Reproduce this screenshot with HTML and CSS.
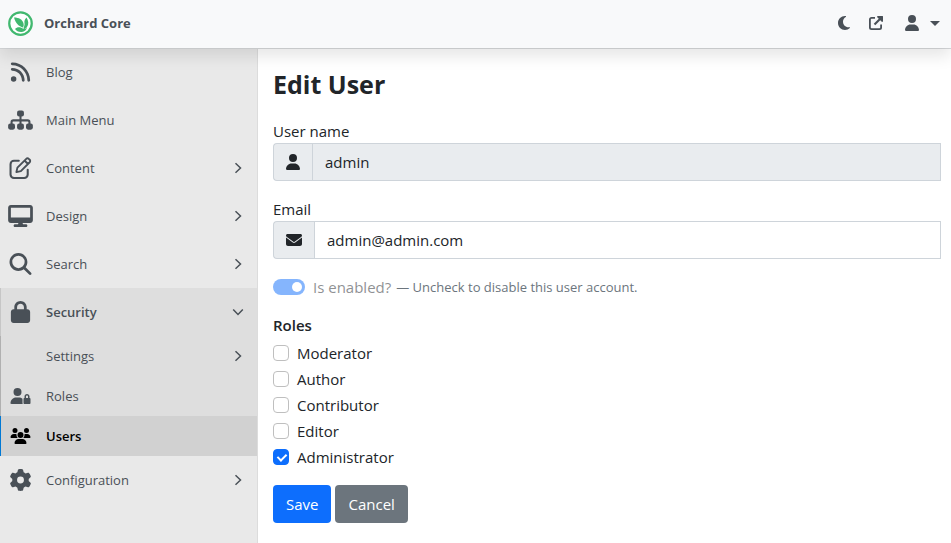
FILE: index.html
```html
<!DOCTYPE html>
<html lang="en">
<head>
    <meta charset="UTF-8" />
    <meta name="viewport" content="width=device-width, initial-scale=1.0" />
    <title>Edit User - Orchard Core</title>
    <link rel="stylesheet" href="styles.css">
</head>
<body>
    <!-- shared icons -->
    <svg class="sprite" aria-hidden="true">
        <symbol id="i-user" viewBox="0 0 448 512"><path d="M224 256A128 128 0 1 0 224 0a128 128 0 1 0 0 256zm-45.700 48C79.800 304 0 383.800 0 482.300C0 498.700 13.300 512 29.700 512H418.300c16.400 0 29.700-13.300 29.700-29.700C448 383.800 368.200 304 269.700 304H178.300z"/></symbol>
        <symbol id="i-right" viewBox="0 0 8 12"><path d="M1.500 1.200 6.500 6l-5 4.800" fill="none" stroke="currentColor" stroke-width="1.500"/></symbol>
        <symbol id="i-down" viewBox="0 0 12 8"><path d="M1.200 1.500 6 6.500l4.800-5" fill="none" stroke="currentColor" stroke-width="1.500"/></symbol>
    </svg>

    <header class="topbar">
        <a class="brand" href="#">
            <svg class="logo" viewBox="0 0 50 50">
                <circle cx="25" cy="25" r="22.500" fill="#fff" stroke="#41b86f" stroke-width="4.500"/>
                <path fill="#41b86f" d="M12 13c10 0 17 4 19 12 1 4 0 7-2 8-8-3-14-9-17-20z"/>
                <path fill="#41b86f" d="M37 13c4 7 5 13 1 19-2 3-4 4-7 4 0-4 3-7 2-12-1-4 1-8 4-11z"/>
                <path fill="#41b86f" d="M14 36c5-5 11-4 17 0 3 0 5-1 7-3-2 7-7 9-12 9-6 0-9-2-12-6z"/>
            </svg>
            <span>Orchard Core</span>
        </a>
        <nav class="tools">
            <button type="button" class="tool" aria-label="Theme">
                <svg width="12" height="14" viewBox="0 0 384 448"><path d="M223.500 0C100 0 0 100.300 0 224s100 224 223.500 224c60.600 0 115.500-24.200 155.800-63.400c5-4.900 6.300-12.500 3.100-18.700s-10.100-9.700-17-8.500c-9.800 1.700-19.800 2.600-30.100 2.600c-96.900 0-175.500-78.800-175.500-176c0-65.800 36-123.100 89.300-153.300c6.100-3.500 9.200-10.500 7.700-17.300s-7.300-11.900-14.300-12.500c-6.300-.5-12.600-.8-19-.8z"/></svg>
            </button>
            <a class="tool" href="#" aria-label="View site">
                <svg width="14" height="14" viewBox="0 0 14 14"><path d="M6 1.900H2.500A1.600 1.600 0 0 0 .9 3.500V11.500A1.600 1.600 0 0 0 2.500 13.100h8A1.600 1.600 0 0 0 12.100 11.500V8.500" fill="none" stroke="currentColor" stroke-width="1.800"/><path d="M5.500 8.500l6-6" stroke="currentColor" stroke-width="2.200"/><path d="M8.500 0H13.500a.5.5 0 0 1 .5.5v5l-1 .5-5-5z"/></svg>
            </a>
            <button type="button" class="tool account" aria-label="Account">
                <svg width="14" height="16"><use href="#i-user"/></svg>
                <span class="caret"></span>
            </button>
        </nav>
    </header>

    <div class="layout">
        <nav class="sidebar">
            <ul class="menu">
                <li><a class="item" href="#">
                    <svg class="icon" viewBox="0 0 448 512"><path d="M0 64C0 46.300 14.300 32 32 32c229.800 0 416 186.200 416 416c0 17.700-14.300 32-32 32s-32-14.300-32-32C384 253.600 226.400 96 32 96C14.300 96 0 81.700 0 64zM0 416a64 64 0 1 1 128 0A64 64 0 1 1 0 416zM32 160c159.100 0 288 128.900 288 288c0 17.700-14.300 32-32 32s-32-14.300-32-32c0-123.700-100.300-224-224-224c-17.700 0-32-14.300-32-32s14.300-32 32-32z"/></svg>
                    <span>Blog</span>
                </a></li>
                <li><a class="item" href="#">
                    <svg class="icon" viewBox="0 0 576 512"><rect x="208" y="32" width="160" height="144" rx="48"/><rect x="0" y="336" width="160" height="144" rx="48"/><rect x="208" y="336" width="160" height="144" rx="48"/><rect x="416" y="336" width="160" height="144" rx="48"/><path d="M288 160v190M80 350v-46a40 40 0 0 1 40-40h336a40 40 0 0 1 40 40v46" fill="none" stroke="currentColor" stroke-width="48"/></svg>
                    <span>Main Menu</span>
                </a></li>
                <li><a class="item" href="#">
                    <svg class="icon" viewBox="0 0 512 512"><path d="M216 88H104a80 80 0 0 0-80 80v240a80 80 0 0 0 80 80h240a80 80 0 0 0 80-80V296" fill="none" stroke="currentColor" stroke-width="48" stroke-linecap="round"/><path d="M160 352l24-104L390 42a40 40 0 0 1 57 0l23 23a40 40 0 0 1 0 57L264 328zM350 82l80 80" fill="none" stroke="currentColor" stroke-width="44" stroke-linejoin="round"/></svg>
                    <span>Content</span>
                    <svg class="chevron"><use href="#i-right"/></svg>
                </a></li>
                <li><a class="item" href="#">
                    <svg class="icon" viewBox="0 0 576 512"><path d="M64 0C28.700 0 0 28.700 0 64V352c0 35.300 28.700 64 64 64H240l-10.700 32H160c-17.700 0-32 14.300-32 32s14.300 32 32 32H416c17.700 0 32-14.300 32-32s-14.300-32-32-32H346.700L336 416H512c35.300 0 64-28.700 64-64V64c0-35.300-28.700-64-64-64H64zM512 64V288H64V64H512z"/></svg>
                    <span>Design</span>
                    <svg class="chevron"><use href="#i-right"/></svg>
                </a></li>
                <li><a class="item" href="#">
                    <svg class="icon" viewBox="0 0 512 512"><path d="M416 208c0 45.900-14.900 88.300-40 122.700L502.600 457.400c12.500 12.500 12.500 32.800 0 45.300s-32.800 12.500-45.300 0L330.700 376c-34.400 25.200-76.800 40-122.700 40C93.100 416 0 322.900 0 208S93.100 0 208 0S416 93.100 416 208zM208 352a144 144 0 1 0 0-288 144 144 0 1 0 0 288z"/></svg>
                    <span>Search</span>
                    <svg class="chevron"><use href="#i-right"/></svg>
                </a></li>
                <li class="open">
                    <a class="item" href="#">
                        <svg class="icon" viewBox="0 0 448 512"><path d="M144 144v48H304V144c0-44.200-35.800-80-80-80s-80 35.800-80 80zM80 192V144C80 64.500 144.500 0 224 0s144 64.500 144 144v48h16c35.300 0 64 28.700 64 64V448c0 35.300-28.700 64-64 64H64c-35.300 0-64-28.700-64-64V256c0-35.300 28.700-64 64-64H80z"/></svg>
                        <span>Security</span>
                        <svg class="chevron down"><use href="#i-down"/></svg>
                    </a>
                    <ul class="menu submenu">
                        <li><a class="item" href="#">
                            <span class="icon"></span>
                            <span>Settings</span>
                            <svg class="chevron"><use href="#i-right"/></svg>
                        </a></li>
                        <li><a class="item" href="#">
                            <svg class="icon" viewBox="0 0 640 512"><path d="M224 256A128 128 0 1 0 224 0a128 128 0 1 0 0 256zm-45.700 48C79.800 304 0 383.800 0 482.300C0 498.700 13.300 512 29.700 512H392.600c-5.400-9.400-8.600-20.300-8.600-32V352c0-2.100 .1-4.200 .3-6.300c-31-26-71-41.700-114.600-41.700H178.300zM528 240c17.700 0 32 14.300 32 32v48H496V272c0-17.700 14.300-32 32-32zm-80 32v48c-17.700 0-32 14.300-32 32V480c0 17.700 14.300 32 32 32H608c17.700 0 32-14.300 32-32V352c0-17.700-14.300-32-32-32V272c0-44.200-35.800-80-80-80s-80 35.800-80 80z"/></svg>
                            <span>Roles</span>
                        </a></li>
                        <li><a class="item active" href="#">
                            <svg class="icon" viewBox="0 0 640 512"><path d="M144 0a80 80 0 1 1 0 160A80 80 0 1 1 144 0zM512 0a80 80 0 1 1 0 160A80 80 0 1 1 512 0zM0 298.700C0 239.800 47.800 192 106.700 192h42.700c15.900 0 31 3.500 44.600 9.700c-1.300 7.200-1.900 14.700-1.900 22.300c0 38.200 16.800 72.500 43.300 96H21.300C9.600 320 0 310.400 0 298.700zM405.300 320h-.7c26.600-23.500 43.300-57.800 43.300-96c0-7.600-.7-15-1.900-22.300c13.600-6.300 28.700-9.700 44.600-9.700h42.700C592.200 192 640 239.800 640 298.700c0 11.800-9.600 21.300-21.300 21.300H405.300zM224 224a96 96 0 1 1 192 0 96 96 0 1 1-192 0zM128 485.300C128 411.700 187.700 352 261.300 352H378.700C452.300 352 512 411.700 512 485.300c0 14.700-11.900 26.700-26.700 26.700H154.700c-14.700 0-26.700-11.900-26.700-26.700z"/></svg>
                            <span>Users</span>
                        </a></li>
                    </ul>
                </li>
                <li><a class="item" href="#">
                    <svg class="icon" viewBox="0 0 512 512"><path d="M495.900 166.600c3.200 8.700 .5 18.400-6.400 24.600l-43.300 39.400c1.100 8.300 1.700 16.800 1.700 25.400s-.6 17.100-1.700 25.400l43.300 39.400c6.900 6.200 9.600 15.900 6.400 24.600c-4.400 11.900-9.700 23.300-15.800 34.300l-4.700 8.100c-6.600 11-14 21.400-22.100 31.200c-5.900 7.200-15.700 9.600-24.500 6.800l-55.700-17.700c-13.400 10.300-28.200 18.900-44 25.400l-12.500 57.100c-2 9.100-9 16.300-18.200 17.800c-13.800 2.300-28 3.500-42.500 3.500s-28.700-1.200-42.500-3.500c-9.200-1.500-16.200-8.700-18.200-17.800l-12.500-57.100c-15.800-6.500-30.600-15.100-44-25.400L83.100 425.900c-8.800 2.800-18.600 .3-24.500-6.800c-8.100-9.800-15.500-20.200-22.100-31.200l-4.700-8.100c-6.100-11-11.400-22.400-15.800-34.300c-3.200-8.700-.5-18.400 6.400-24.600l43.300-39.400C64.600 273.100 64 264.600 64 256s.6-17.100 1.700-25.400L22.400 191.200c-6.900-6.200-9.600-15.900-6.400-24.600c4.400-11.900 9.700-23.300 15.800-34.300l4.700-8.100c6.600-11 14-21.400 22.100-31.200c5.900-7.200 15.700-9.600 24.500-6.800l55.700 17.700c13.400-10.300 28.200-18.900 44-25.400l12.500-57.100c2-9.100 9-16.300 18.200-17.800C227.300 1.200 241.500 0 256 0s28.700 1.200 42.500 3.500c9.200 1.500 16.200 8.700 18.200 17.800l12.500 57.100c15.800 6.500 30.600 15.100 44 25.400l55.700-17.700c8.800-2.800 18.600-.3 24.500 6.800c8.100 9.800 15.500 20.200 22.100 31.200l4.700 8.100c6.100 11 11.400 22.400 15.800 34.300zM256 336a80 80 0 1 0 0-160 80 80 0 1 0 0 160z"/></svg>
                    <span>Configuration</span>
                    <svg class="chevron"><use href="#i-right"/></svg>
                </a></li>
            </ul>
        </nav>

        <main class="content">
            <h1>Edit User</h1>
            <form>
                <div class="field">
                    <label for="username">User name</label>
                    <div class="input-group">
                        <span class="addon"><svg width="14" height="16"><use href="#i-user"/></svg></span>
                        <input type="text" id="username" name="username" value="admin" readonly>
                    </div>
                </div>

                <div class="field">
                    <label for="email">Email</label>
                    <div class="input-group">
                        <span class="addon"><svg width="16" height="16" viewBox="0 0 512 512"><path d="M48 64C21.500 64 0 85.500 0 112c0 15.100 7.100 29.300 19.200 38.400L236.800 313.600c11.400 8.500 27 8.500 38.400 0L492.800 150.400c12.100-9.100 19.200-23.300 19.200-38.400c0-26.500-21.500-48-48-48H48zM0 176V384c0 35.300 28.700 64 64 64H448c35.300 0 64-28.700 64-64V176L294.400 339.200c-22.800 17.100-54 17.100-76.800 0L0 176z"/></svg></span>
                        <input type="email" id="email" name="email" value="admin@admin.com">
                    </div>
                </div>

                <div class="check-row enabled">
                    <input type="checkbox" class="switch" id="enabled" checked disabled>
                    <label for="enabled">Is enabled?</label>
                    <span class="hint">— Uncheck to disable this user account.</span>
                </div>

                <fieldset class="roles">
                    <legend>Roles</legend>
                    <div class="check-row"><input type="checkbox" class="check" id="moderator"><label for="moderator">Moderator</label></div>
                    <div class="check-row"><input type="checkbox" class="check" id="author"><label for="author">Author</label></div>
                    <div class="check-row"><input type="checkbox" class="check" id="contributor"><label for="contributor">Contributor</label></div>
                    <div class="check-row"><input type="checkbox" class="check" id="editor"><label for="editor">Editor</label></div>
                    <div class="check-row"><input type="checkbox" class="check" id="administrator" checked><label for="administrator">Administrator</label></div>
                </fieldset>

                <div class="actions">
                    <button type="submit" class="btn primary">Save</button>
                    <a class="btn secondary" href="#">Cancel</a>
                </div>
            </form>
        </main>
    </div>
</body>
</html>
```
FILE: styles.css
```css
* {
    box-sizing: border-box;
}

body {
    display: flex;
    flex-direction: column;
    min-height: 100vh;
    margin: 0;
    font-family: "Segoe UI", "Open Sans", "Noto Sans", sans-serif;
    font-size: 15px;
    line-height: 24px;
    color: #212529;
    background-color: #fff;
}

svg {
    fill: currentColor;
}

a {
    color: inherit;
    text-decoration: none;
}

.sprite {
    display: none;
}

/* Top bar */
.topbar {
    position: relative;
    z-index: 1;
    display: flex;
    align-items: center;
    justify-content: space-between;
    height: 48px;
    padding: 0 11px 2px 8px;
    color: #495057;
    background-color: #f8f9fa;
    box-shadow: 0 8px 16px rgba(0, 0, 0, 0.1), 0 1px 0 #d9dbdd;
}

.brand {
    display: flex;
    align-items: center;
    gap: 11px;
    font-size: 13px;
    font-weight: 700;
}

.logo {
    width: 25px;
    height: 25px;
}

.tools {
    display: flex;
    align-items: center;
    gap: 19px;
}

.tool {
    display: flex;
    align-items: center;
    padding: 0;
    border: 0;
    color: inherit;
    background: none;
}

.account {
    gap: 11px;
    margin-left: 3px;
}

.caret {
    border-top: 5px solid;
    border-left: 5px solid transparent;
    border-right: 5px solid transparent;
}

/* Sidebar */
.layout {
    display: flex;
    flex: 1;
}

.sidebar {
    flex: 0 0 258px;
    border-right: 1px solid #dcdcdc;
    background-color: #e9e9e9;
}

.menu {
    margin: 0;
    padding: 0;
    list-style: none;
}

.item {
    display: flex;
    align-items: center;
    gap: 13px;
    height: 48px;
    padding: 0 15px 0 7px;
    border-left: 1px solid transparent;
    font-size: 13px;
    color: #495057;
}

.icon {
    width: 25px;
    height: 22px;
}

.chevron {
    width: 8px;
    height: 12px;
    margin-left: auto;
}

.chevron.down {
    width: 12px;
    height: 8px;
    margin-right: -2px;
}

.open {
    background-color: #dedede;
}

.open > .item {
    border-left-color: #c6c6c6;
    font-weight: 600;
}

.submenu .item {
    height: 40px;
    border-left-color: #b0b0b0;
}

.submenu .icon {
    height: 16px;
}

.submenu .active {
    border-left-color: #0078d4;
    font-weight: 600;
    color: #000;
    background-color: #d1d1d1;
}

/* Form */
.content {
    flex: 1;
    padding: 16px 10px 16px 15px;
}

h1 {
    margin: 0 0 15px;
    font-size: 25px;
    font-weight: 700;
    line-height: 40px;
}

.field {
    margin-bottom: 16px;
}

.field > label {
    display: block;
}

.input-group {
    display: flex;
    height: 38px;
}

.addon {
    display: flex;
    align-items: center;
    padding: 0 12px;
    border: 1px solid #ced4da;
    border-right: 0;
    border-radius: 4px 0 0 4px;
    background-color: #e9ecef;
}

.input-group input {
    flex: 1;
    min-width: 0;
    padding: 0 12px;
    border: 1px solid #ced4da;
    border-radius: 0;
    font: inherit;
    color: inherit;
    background-color: #fff;
}

.input-group input:read-only {
    background-color: #e9ecef;
}

.check-row {
    display: flex;
    align-items: center;
    gap: 8px;
}

.enabled {
    margin-bottom: 14px;
}

.switch,
.check {
    position: relative;
    appearance: none;
    flex: none;
    height: 16px;
    margin: 0;
}

.switch {
    width: 32px;
    border-radius: 8px;
    background-color: #0d6efd;
    opacity: 0.5;
}

.switch::after {
    content: "";
    position: absolute;
    top: 3px;
    right: 3px;
    width: 10px;
    height: 10px;
    border-radius: 50%;
    background-color: #fff;
}

.switch:disabled + label {
    opacity: 0.5;
}

.hint {
    margin-left: -3px;
    font-size: 13px;
    color: #6c757d;
}

.check {
    width: 16px;
    border: 1px solid #bfbfbf;
    border-radius: 4px;
    background-color: #fff;
}

.check:checked {
    border-color: #0d6efd;
    background-color: #0d6efd;
}

.check:checked::after {
    content: "";
    position: absolute;
    top: 2px;
    left: 5px;
    width: 4px;
    height: 7px;
    border: solid #fff;
    border-width: 0 2px 2px 0;
    transform: rotate(45deg);
}

.roles {
    margin: 0 0 14px;
    padding: 0;
    border: 0;
}

.roles legend {
    margin-bottom: 4px;
    padding: 0;
    font-weight: 600;
}

.roles .check-row {
    margin-bottom: 2px;
}

.actions {
    display: flex;
    gap: 4px;
}

.btn {
    padding: 6px 12px;
    border: 1px solid transparent;
    border-radius: 4px;
    font: inherit;
    color: #fff;
    cursor: pointer;
}

.primary {
    background-color: #0d6efd;
}

.secondary {
    background-color: #6c757d;
}
```
